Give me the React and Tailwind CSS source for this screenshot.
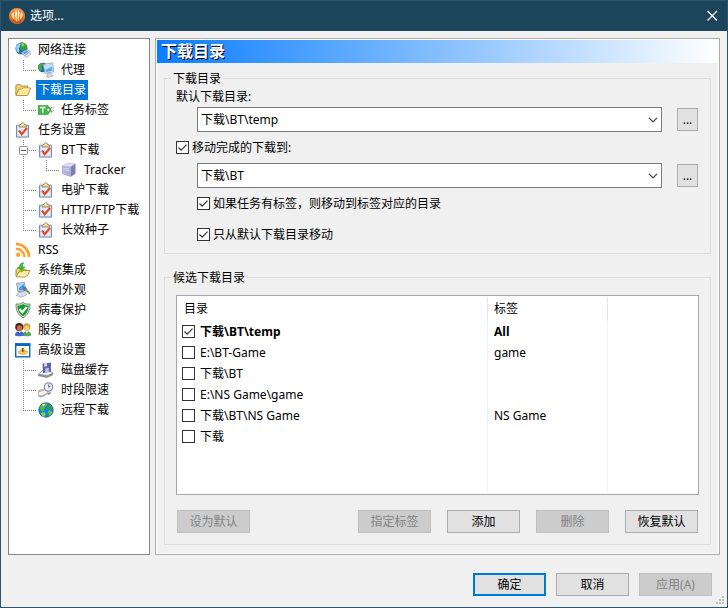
import React, { useState } from 'react';

const ICONS = {
  network: (
    <>
      <circle cx="6.500" cy="6.500" r="6" fill="#1f62b5" />
      <path d="M.8 5C1.500 3 3 1.500 4.500 1L6 2 5 4.500 4 6.500 4.500 9 3.500 11 1.500 9z" fill="#8fd0f5" />
      <path d="M5 1c3-1 5 0 6.500 2l.8 3-1.800 1-2.500 2L6 8 5 5.500 6.500 3z" fill="#3aa335" />
      <path d="M6 1.500l2-.3 1.500 2L7.500 5z" fill="#8ed657" />
      <path d="M3 10l2.500 1.500L5 12.500 3 11.500z" fill="#3aa335" />
      <path d="M6 10.800L11.800 7.500l3.200 2.300-5.500 3.700z" fill="#d5e2f3" stroke="#6d88ad" strokeWidth=".6" />
      <path d="M7.500 10.700l4.200-2.200 1.800 1.300-4 2.400z" fill="#5d9be0" />
      <path d="M9.500 14l5-3.500 1.500 1.500-4.500 3.500z" fill="#e9ebf0" stroke="#8a909c" strokeWidth=".6" />
    </>
  ),
  proxy: (
    <>
      <circle cx="4.800" cy="5.500" r="4.800" fill="#2166b8" />
      <path d="M.5 3.500L3.500 1l2 .5-1 2.500-1 1 .5 2.500-1.500 1.500L.5 7z" fill="#46ae38" />
      <path d="M5.300 2.500L14.800.8l.9 9-8.700 1.700z" fill="#e3ebf6" stroke="#7b93b8" strokeWidth=".7" />
      <path d="M6.500 3.500l7.400-1.300.7 6.600-6.700 1.400z" fill="#5aa9ee" />
      <path d="M6.500 3.500l7.400-1.300.2 2.300L7.200 8z" fill="#bfe2fb" />
      <path d="M9.500 11.300l3.500-.7.8 2.600 1.500.6-5 2-2.500-1.300 1.900-1z" fill="#d3d4df" stroke="#8d90a3" strokeWidth=".5" />
    </>
  ),
  folder: (
    <>
      <path d="M.8 13.300V4l.8-1.300h3.900l1 1.300h6.300v3" fill="#f0cf6e" stroke="#a8802c" strokeWidth=".8" />
      <path d="M1 13.500L3.700 7.300h3l1.500-1.300h7.500l-3 7.500z" fill="#fbe59a" stroke="#a8802c" strokeWidth=".8" />
      <path d="M4.300 8.200H7l1.500-1.300h6" fill="none" stroke="#fffbe0" strokeWidth=".8" />
    </>
  ),
  tag: (
    <>
      <path d="M0 3.500h10L13 8l-3 4.500H0z" fill="#43b649" stroke="#2f9a3a" strokeWidth=".6" />
      <path d="M2 5.500h5.500M4.750 5.500v5.500" stroke="#fff" strokeWidth="1.300" />
      <circle cx="10.500" cy="8" r="1.200" fill="#fff" />
      <path d="M11 8c2-3 3-3 5-2M11 8c2 1.500 3 2 5 .5M12 6l2 5" fill="none" stroke="#6b806b" strokeWidth=".7" />
    </>
  ),
  task: (
    <>
      <rect x="1" y="2.800" width="13" height="12.700" rx="1" fill="#5f78a8" />
      <rect x="2" y="3.500" width="11" height="11" fill="#e3ecf9" stroke="#a9bcdb" strokeWidth=".7" />
      <path d="M4 5V3.300l2-.8C6.500.3 9.500.3 9.500 2.500l2 .8V5z" fill="#ead9a0" stroke="#8b7440" strokeWidth=".8" />
      <circle cx="7.800" cy="2.300" r=".8" fill="#fff" />
      <path d="M4 8.500l2.700 3.800L12 6" fill="none" stroke="#e04c26" strokeWidth="2.200" />
    </>
  ),
  server: (
    <>
      <path d="M1 4L7 .8l7.500 1L9.500 5z" fill="#dedef2" stroke="#b1b1d6" strokeWidth=".5" />
      <path d="M1 4l8.500 1v10L1 12z" fill="#adadd8" />
      <path d="M9.500 5l5-3.200v10L9.500 15z" fill="#7f7fb8" />
      <path d="M2 6l6.500 1M2 7.800l6.500 1" stroke="#dadaf3" strokeWidth=".9" />
      <path d="M2 11l4 1.500" stroke="#c7c7ea" strokeWidth="1" />
    </>
  ),
  rss: (
    <>
      <circle cx="3.200" cy="12.800" r="2.200" fill="#ffa52b" />
      <path d="M1 6.700a8.300 8.300 0 0 1 8.300 8.300" fill="none" stroke="#ffa52b" strokeWidth="2.600" />
      <path d="M1 2a13 13 0 0 1 13 13" fill="none" stroke="#ff9d22" strokeWidth="2.600" />
    </>
  ),
  integrate: (
    <>
      <path d="M1 14.500V7.500l1-1h3l1.500 1.300h5v2.500" fill="#eed46c" stroke="#927826" strokeWidth=".8" />
      <path d="M1.200 14.800L4 9.800h3L8.500 8.500H15l-2.500 5-3 1.500z" fill="#fdf2a4" stroke="#9a7d22" strokeWidth=".8" />
      <path d="M9 .8C5.800.8 4.300 2.500 4.600 5H2.500l4 4L10 5H7.600C7.300 3.500 7.500 2 9 .8z" fill="#3cc034" stroke="#1f8a22" strokeWidth=".5" />
    </>
  ),
  look: (
    <>
      <path d="M1.500 1.300L9.500.5l1 8-7.500 1.300z" fill="#d5dfec" stroke="#6a7f9e" strokeWidth=".7" />
      <path d="M2.700 2.400L8.700 1.800l.8 5.900-5.500.9z" fill="#4c9ee8" />
      <path d="M2.700 2.400L8.700 1.800 3.300 6.500z" fill="#b4dcfa" />
      <path d="M4 10.500l5-1 3 3-5.500 2.700L1.500 13.500z" fill="#dbe1ec" stroke="#8490a6" strokeWidth=".6" />
      <path d="M7.500 4.500c2.500-.5 4 .8 4.700 3l-2 2C8.500 8.500 7.300 7 7.500 4.500z" fill="#3d79bb" />
      <path d="M9.500 8l2-1.300 1.500 1.500-1.500 1.800z" fill="#c9774d" />
      <path d="M11.500 9.500l1.500-1.300L15.500 11l-1 1.500z" fill="#36a540" />
    </>
  ),
  shield: (
    <>
      <path d="M8 .3c2 1.600 4.200 2 7 1.700C15.200 8.500 13 13.200 8 15.700 3 13.200.8 8.500 1 2 3.800 2.300 6 1.900 8 .3z" fill="#cfdccf" stroke="#556355" strokeWidth=".7" />
      <path d="M8 2c1.700 1.200 3.500 1.600 5.500 1.500C13.500 8.500 11.800 12 8 14.200 4.200 12 2.500 8.500 2.500 3.500 4.500 3.600 6.300 3.200 8 2z" fill="#129a2a" />
      <path d="M4.500 7l2.800 3.300L11.800 5" fill="none" stroke="#fff" strokeWidth="2.200" />
    </>
  ),
  users: (
    <>
      <circle cx="11.700" cy="5" r="3.700" fill="#d0a040" />
      <circle cx="11.800" cy="6" r="2.500" fill="#f3cf7b" />
      <path d="M7.500 13.500C7.500 10.500 9 9.300 12 9.300s4 1.200 4 4.200c-1.500 1-7 1-8.500 0z" fill="#58a55c" />
      <circle cx="4.200" cy="5" r="4" fill="#382a27" />
      <circle cx="4.500" cy="6" r="2.700" fill="#d9673a" />
      <path d="M0 13.500C0 10.500 1.500 9.300 4.500 9.300s4.300 1.200 4.300 4.200c-1.800 1-7 1-8.800 0z" fill="#3f62d2" />
      <path d="M3.300 9.300l1.200 2.200 1.400-2.200zM10.800 9.300l1 2.200 1.400-2.200z" fill="#fff" />
    </>
  ),
  advanced: (
    <>
      <rect x=".7" y="2" width="14" height="12.800" fill="#fff" stroke="#0a66c2" strokeWidth="1.400" />
      <path d="M0 1.300h15.400v2.700H0z" fill="#0a66c2" />
      <path d="M3 9l2.500-.8 1.500-2.700 2 .5.500 2 3.500 1-.5 2.200-3 1.600-4.500-.3L3 11z" fill="#f0b43a" />
      <path d="M7.800 6v4.500" stroke="#5b4630" strokeWidth="1.200" />
      <path d="M4.500 10l3.300 1 3.500-.8" fill="none" stroke="#fff0c0" strokeWidth=".8" />
    </>
  ),
  disk: (
    <>
      <path d="M.5 12l4-3.500h6l4.500 2.500-.5 2-5.500 2.500-8.500-1.800z" fill="#96969f" stroke="#6e6e7c" strokeWidth=".6" />
      <path d="M1 11.800l4-2.800 6 .5 3.500 1.500-5.500 2.200z" fill="#ececf2" />
      <path d="M4.500 1.800l2-.8V4l2.500-.5V1L13 .5v9L5 11z" fill="#6264ac" />
      <path d="M6.500.8l2.500-.5v4l-2.500.5z" fill="#d8d9f2" />
      <path d="M7.300 6.500l3.500-.6v3.800l-3.500.7z" fill="#c2c3ea" />
      <path d="M12 13l1.800-.8" stroke="#4ea648" />
    </>
  ),
  clock: (
    <>
      <path d="M1 9.500l8-2.500 2 4.500-7.500 4-3-.5z" fill="#a9a9b2" />
      <path d="M.5 8.500l7.500-2.300L10 11l-6.500 3-3-.5z" fill="#f6f6fb" stroke="#8d8d99" strokeWidth=".6" />
      <path d="M1 9.500l7.300-2.200" stroke="#e08a5a" strokeWidth="1" />
      <circle cx="10.500" cy="5" r="4.800" fill="#90909c" />
      <circle cx="10.500" cy="5" r="3.600" fill="#e6f1fa" />
      <path d="M10.500 2.500v2.800l2-1.300" fill="none" stroke="#4b5d78" strokeWidth=".8" />
      <path d="M9.500 11.500l3-1.500.5 1.500-2.500 1.500z" fill="#888894" />
    </>
  ),
  globe: (
    <>
      <circle cx="8" cy="8" r="7.200" fill="#1787d6" stroke="#14508f" strokeWidth=".8" />
      <path d="M1.500 6C2.500 3.500 4 2 6 1.500L9 1.300 9.500 3 7.500 4.500 7 6.500 5.500 7.500 6 9 4 9.500z" fill="#57b83c" />
      <path d="M4 2.800l2.500-1 1 .7L5 4.500z" fill="#d9f5b4" />
      <path d="M4.500 10l2.500.5.500 2L6.500 15C5 14.500 3.500 13.500 2.700 12z" fill="#7cd04c" />
      <path d="M11 2.500c2 1 3.500 2.500 3.800 4.500l-1.800.8-1.500-1.300-1.500.3V4.500z" fill="#3f9f35" />
      <path d="M10 8.500l3 .3 1.500 1.700c-.5 1.500-1.500 2.500-3 3.500l-1-2.500z" fill="#6fc044" />
    </>
  ),
};

const TREE = [
  { text: '网络连接', icon: 'network', lines: [] },
  { text: '代理', icon: 'proxy', lines: ['end'] },
  { text: '下载目录', icon: 'folder', lines: [] },
  { text: '任务标签', icon: 'tag', lines: ['end'] },
  { text: '任务设置', icon: 'task', lines: [] },
  { text: 'BT下载', icon: 'task', lines: ['open'] },
  { text: 'Tracker', icon: 'server', lines: ['pass', 'end'] },
  { text: '电驴下载', icon: 'task', lines: ['tee'] },
  { text: 'HTTP/FTP下载', icon: 'task', lines: ['tee'] },
  { text: '长效种子', icon: 'task', lines: ['end'] },
  { text: 'RSS', icon: 'rss', lines: [] },
  { text: '系统集成', icon: 'integrate', lines: [] },
  { text: '界面外观', icon: 'look', lines: [] },
  { text: '病毒保护', icon: 'shield', lines: [] },
  { text: '服务', icon: 'users', lines: [] },
  { text: '高级设置', icon: 'advanced', lines: [] },
  { text: '磁盘缓存', icon: 'disk', lines: ['tee'] },
  { text: '时段限速', icon: 'clock', lines: ['tee'] },
  { text: '远程下载', icon: 'globe', lines: ['end'] },
];

const FOLDERS = [
  { path: '下载\\BT\\temp', tag: 'All', checked: true },
  { path: 'E:\\BT-Game', tag: 'game' },
  { path: '下载\\BT', tag: '' },
  { path: 'E:\\NS Game\\game', tag: '' },
  { path: '下载\\BT\\NS Game', tag: 'NS Game' },
  { path: '下载', tag: '' },
];

// dotted connector drawn in front of a child item
const TreeLine = ({ kind }) => (
  <svg width="23" height="20" className="shrink-0" aria-hidden="true">
    <g stroke="#808080" strokeDasharray="1 1" fill="none">
      <path d={kind === 'end' ? 'M8.500 0V11' : 'M8.500 0V20'} />
      {kind !== 'pass' && <path d="M8 10.500H21" />}
    </g>
    {kind === 'open' && (
      <>
        <rect x="4.500" y="6.500" width="8" height="8" rx="1" fill="#fff" stroke="#919191" />
        <path d="M6 10.500h5" stroke="#3c5aa8" />
      </>
    )}
  </svg>
);

const TreeItem = ({ item, selected, onSelect }) => (
  <li className="flex h-5 items-center">
    {item.lines.map((kind, i) => (
      <TreeLine key={i} kind={kind} />
    ))}
    <button type="button" onClick={onSelect} className="flex h-5 items-center gap-[5px] whitespace-nowrap">
      <svg width="16" height="16" viewBox="0 0 16 16" className="shrink-0" aria-hidden="true">
        {ICONS[item.icon]}
      </svg>
      <span className={selected ? 'bg-[#0078d7] px-0.5 leading-5 text-white' : 'px-0.5 leading-5'}>
        {item.text}
      </span>
    </button>
  </li>
);

const Check = ({ id, label, defaultChecked }) => (
  <span className="grid size-[13px] shrink-0">
    <input
      type="checkbox"
      id={id}
      aria-label={label}
      defaultChecked={defaultChecked}
      className="peer size-[13px] appearance-none border border-[#333] bg-white [grid-area:1/1]"
    />
    <svg
      viewBox="0 0 13 13"
      className="pointer-events-none invisible size-[13px] [grid-area:1/1] peer-checked:visible"
      aria-hidden="true"
    >
      <path d="M2.500 6.500l2.700 2.700 5.300-5.500" fill="none" stroke="#333" strokeWidth="1.200" />
    </svg>
  </span>
);

const CheckRow = ({ id, children, className }) => (
  <div className={`flex h-[31px] items-center gap-[3px] ${className || ''}`}>
    <Check id={id} defaultChecked />
    <label htmlFor={id}>{children}</label>
  </div>
);

const PathRow = ({ label, value, id }) => (
  <div className="flex items-center gap-[15px] pl-[21px]">
    <div className="relative flex-1">
      <select
        id={id}
        aria-label={label}
        className="block h-[25px] w-full appearance-none border border-[#7a7a7a] bg-white px-[3px]"
      >
        <option>{value}</option>
      </select>
      <svg width="10" height="6" className="pointer-events-none absolute right-1 top-[10px]" aria-hidden="true">
        <path d="M1 .8l4 4 4-4" fill="none" stroke="#444" strokeWidth="1.200" />
      </svg>
    </div>
    <button type="button" aria-label="浏览" className="h-[23px] w-[21px] border border-[#adadad] bg-[#e1e1e1]">
      ...
    </button>
  </div>
);

const Button = ({ children, disabled, primary, className }) => {
  let look = 'border border-[#adadad] bg-[#e1e1e1]';
  if (disabled) look = 'border border-[#bfbfbf] bg-[#ccc] text-[#838383]';
  if (primary) look = 'border-2 border-[#0078d7] bg-[#e1e1e1]';
  return (
    <button
      type="button"
      disabled={disabled}
      className={`flex h-[23px] w-[73px] items-center justify-center whitespace-nowrap ${look} ${className || ''}`}
    >
      {children}
    </button>
  );
};

const Group = ({ title, children, className }) => (
  <fieldset className={`min-w-0 border border-[#dcdcdc] px-1.5 ${className || ''}`}>
    <legend className="px-0.5 leading-[13px]">{title}</legend>
    {children}
  </fieldset>
);

const FolderTable = () => (
  <div className="flex min-h-[200px] flex-1 border border-[#a5a7ae] bg-white py-px">
    <table className="w-full table-fixed border-separate border-spacing-0 text-left">
      <colgroup>
        <col className="w-[311px]" />
        <col className="w-[120px]" />
        <col />
      </colgroup>
      <thead>
        <tr className="h-6">
          <th className="border-r border-[#e5e5e5] p-0 pl-[7px] font-normal">目录</th>
          <th className="border-r border-[#e5e5e5] p-0 pl-1.5 font-normal">标签</th>
          <td />
        </tr>
      </thead>
      <tbody>
        {FOLDERS.map((row) => (
          <tr key={row.path} className={row.checked ? 'h-[21px] font-bold' : 'h-[21px]'}>
            <td className="border-r border-[#edf3f9] p-0 pl-[5px]">
              <div className="flex items-center gap-[5px]">
                <Check label={row.path} defaultChecked={row.checked} />
                <span>{row.path}</span>
              </div>
            </td>
            <td className="border-r border-[#edf3f9] p-0 pl-1.5">{row.tag}</td>
            <td />
          </tr>
        ))}
        <tr>
          <td className="border-r border-[#edf3f9]" />
          <td className="border-r border-[#edf3f9]" />
          <td />
        </tr>
      </tbody>
    </table>
  </div>
);

const App = () => {
  const [selected, setSelected] = useState(2);

  return (
    <div className="relative flex min-h-screen flex-col border border-[#2b556c] bg-[#f0f0f0] font-['Noto_Sans','Noto_Sans_CJK_SC',sans-serif] text-[12px] leading-4 text-black">
      <header className="flex h-[30px] shrink-0 items-center gap-[5px] bg-[#1c445a] pl-2 pr-[9px] text-white">
        <svg width="16" height="16" viewBox="0 0 16 16" aria-hidden="true">
          <defs>
            <linearGradient id="logo" x1="0" y1="0" x2="0" y2="1">
              <stop offset="0" stopColor="#f7a04a" />
              <stop offset=".5" stopColor="#f07a1c" />
              <stop offset="1" stopColor="#c9420a" />
            </linearGradient>
            <linearGradient id="flame" x1="0" y1="0" x2="0" y2="1">
              <stop offset="0" stopColor="#fffbe6" />
              <stop offset="1" stopColor="#ffc470" />
            </linearGradient>
          </defs>
          <circle cx="8" cy="8" r="7.800" fill="url(#logo)" stroke="#d9a07c" strokeWidth=".5" />
          <path
            d="M2.500 6.500L4 4l1.200 2.500.3 5.500C3.800 10.500 2.600 9 2.500 6.500zM5.800 5L7.200 1.500 8 5v9L6.500 12zM8.600 5L9.400 1.500 10.600 5 10 12 8.600 14zM11.200 6.500L12.500 4l1.200 2.500c-.1 2.500-1.200 4-2.800 5.500z"
            fill="url(#flame)"
          />
        </svg>
        <h1 className="flex-1">选项...</h1>
        <button type="button" aria-label="关闭">
          <svg width="12" height="12" viewBox="0 0 12 12" aria-hidden="true">
            <path d="M1.500 1l9.500 9.500M11 1L1.500 10.500" stroke="#fff" strokeWidth="1.200" />
          </svg>
        </button>
      </header>

      <div className="flex flex-1 gap-[5px] px-[7px] pt-[7px]">
        <nav className="w-[142px] shrink-0 border border-[#828790] bg-white pl-1.5 pt-px">
          <ul>
            {TREE.map((item, i) => (
              <TreeItem key={item.text} item={item} selected={i === selected} onSelect={() => setSelected(i)} />
            ))}
          </ul>
        </nav>

        <main className="flex min-w-0 flex-1 border border-[#acacac]">
          <div className="flex min-w-0 flex-1 flex-col border border-white pb-2">
            <h2 className="h-[23px] bg-linear-to-r/srgb from-[#0a7dff] to-white pl-1 text-[16px] leading-[23px] font-bold text-white [text-shadow:1px_1px_0_#000]">
              下载目录
            </h2>
            <div className="flex flex-1 flex-col gap-[17px] px-[7px] pt-[9px]">
              <Group title="下载目录">
                <div className="pb-[3px] pl-[5px] pr-1.5">
                  <label htmlFor="default-dir" className="block h-[22px] leading-6">
                    默认下载目录:
                  </label>
                  <PathRow id="default-dir" value="下载\BT\temp" />
                  <CheckRow id="move-done">移动完成的下载到:</CheckRow>
                  <PathRow label="移动完成的下载到" value="下载\BT" />
                  <CheckRow id="move-tag" className="pl-[21px]">如果任务有标签，则移动到标签对应的目录</CheckRow>
                  <CheckRow id="move-default" className="pl-[21px]">只从默认下载目录移动</CheckRow>
                </div>
              </Group>

              <Group title="候选下载目录" className="flex flex-1 flex-col">
                <div className="flex flex-1 flex-col gap-[15px] px-[5px] py-[11px]">
                  <FolderTable />
                  <div className="flex gap-4 px-px">
                    <Button disabled className="mr-auto">设为默认</Button>
                    <Button disabled>指定标签</Button>
                    <Button>添加</Button>
                    <Button disabled>删除</Button>
                    <Button>恢复默认</Button>
                  </div>
                </div>
              </Group>
            </div>
          </div>
        </main>
      </div>

      <footer className="flex justify-end gap-2.5 pb-[11px] pr-[15px] pt-[18px]">
        <Button primary>确定</Button>
        <Button>取消</Button>
        <Button disabled>应用(A)</Button>
      </footer>
      <svg width="9" height="9" className="absolute bottom-0.5 right-0.5" aria-hidden="true">
        <path d="M6 0h2v2H6zM3 3h2v2H3zM6 3h2v2H6zM0 6h2v2H0zM3 6h2v2H3zM6 6h2v2H6z" fill="#bfbfbf" />
      </svg>
    </div>
  );
};

export default App;
